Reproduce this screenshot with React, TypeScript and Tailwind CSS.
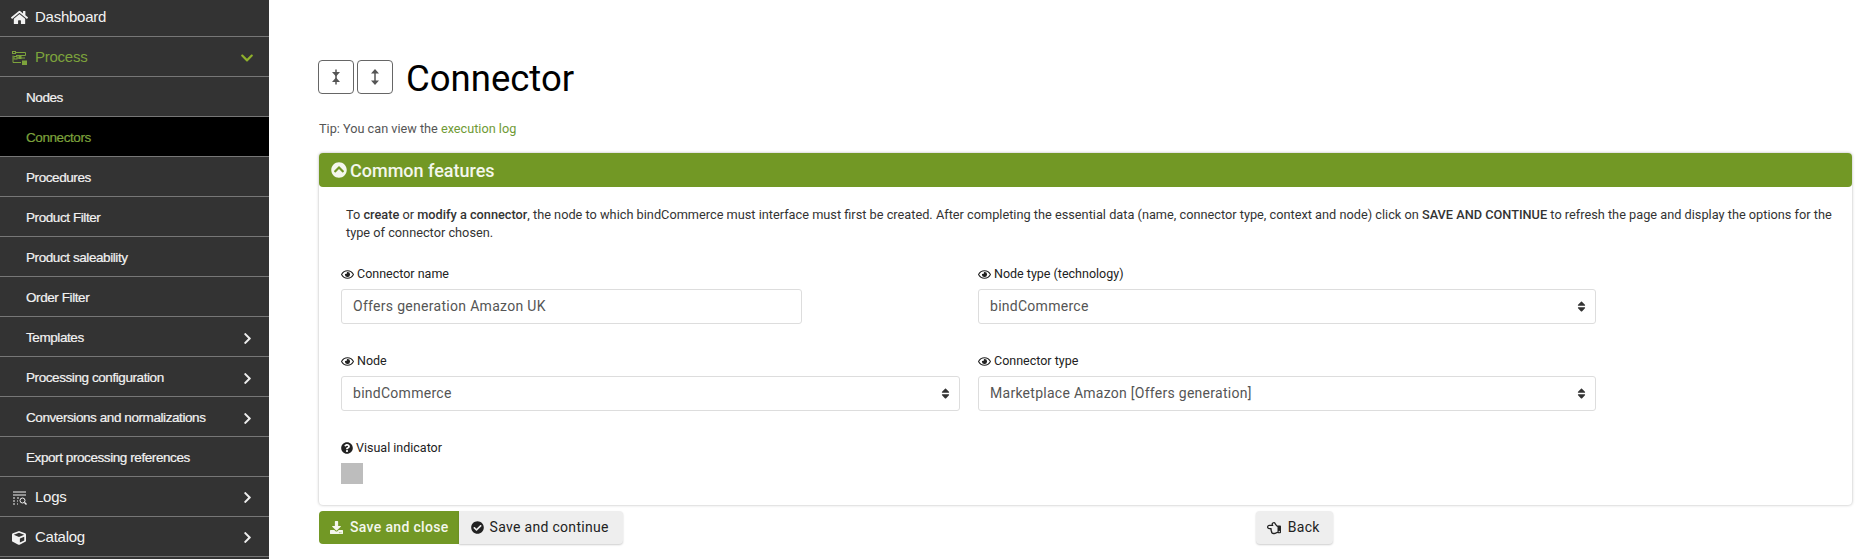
import React from "react";
import { FaHome, FaChevronDown, FaChevronRight, FaRegEye, FaQuestionCircle, FaDownload, FaCheckCircle, FaChevronCircleUp, FaRegHandPointLeft, FaSort, FaCube } from "react-icons/fa";

const ProcessIcon = () => (
  <svg width="15" height="14" viewBox="0 0 15 14" fill="none" stroke="currentColor" strokeWidth="1">
    <rect x="0.500" y="0.500" width="3" height="2" />
    <path d="M3.500 1.500H13.500V4.500H4M1 4.500V11.500H9" />
    <rect x="2" y="5.500" width="3" height="2.500" />
    <path d="M5 7h8" />
    <rect x="7" y="5.500" width="2" height="2" fill="currentColor" />
    <rect x="10.500" y="10" width="4" height="3.500" fill="currentColor" />
  </svg>
);

const LogsIcon = () => (
  <svg width="15" height="14" viewBox="0 0 15 14" fill="none" stroke="currentColor" strokeWidth="1">
    <path d="M1 1h13M1 4h13" />
    <path d="M1 7h2M1 10h2M1 13h2M5 7h2M5 10h1M5 13h1" />
    <circle cx="10.500" cy="9.500" r="2.500" />
    <path d="M12.500 11.500l2 2" strokeWidth="1.400" />
  </svg>
);

const MENU: { label: string; level: 0 | 1; icon?: React.ReactNode; chevron?: "right" | "down"; state?: "open" | "active" }[] = [
  { label: "Process", level: 0, icon: <ProcessIcon />, chevron: "down", state: "open" },
  { label: "Nodes", level: 1 },
  { label: "Connectors", level: 1, state: "active" },
  { label: "Procedures", level: 1 },
  { label: "Product Filter", level: 1 },
  { label: "Product saleability", level: 1 },
  { label: "Order Filter", level: 1 },
  { label: "Templates", level: 1, chevron: "right" },
  { label: "Processing configuration", level: 1, chevron: "right" },
  { label: "Conversions and normalizations", level: 1, chevron: "right" },
  { label: "Export processing references", level: 1 },
  { label: "Logs", level: 0, icon: <LogsIcon />, chevron: "right" },
  { label: "Catalog", level: 0, icon: <FaCube size={14} />, chevron: "right" },
];

const Row = ({ item }: { item: (typeof MENU)[number] }) => {
  const green = item.state ? "text-[#7da33c]" : "text-[#f2f2f2]";
  return (
    <div className={`flex h-10 shrink-0 items-center border-b border-[#777] pr-[15px] ${item.level === 1 ? "pt-[3px]" : "pt-[2px]"} ${item.state === "active" ? "bg-black" : ""} ${green}`}>
      {item.level === 0 ? (
        <>
          <span className="flex w-[35px] pl-[12px]">{item.icon}</span>
          <span className="text-[15px] tracking-[-0.25px]">{item.label}</span>
        </>
      ) : (
        <span className="pl-[26px] text-[13.500px] tracking-[-0.42px] [-webkit-text-stroke:0.2px]">{item.label}</span>
      )}
      {item.chevron === "right" && <FaChevronRight size={13} className="ml-auto text-[#eee]" />}
      {item.chevron === "down" && <FaChevronDown size={14} className="ml-auto text-[#8fb02c]" />}
    </div>
  );
};

const Label = ({ q, children }: { q?: boolean; children: React.ReactNode }) => (
  <div className="mb-[5px] flex h-[20px] items-center gap-[3px] text-[12.500px] text-[#222]">
    {q ? <FaQuestionCircle size={12} /> : <FaRegEye size={13} />}
    {children}
  </div>
);

const Select = ({ value }: { value: string }) => (
  <div className="flex h-[35px] items-center justify-between rounded-[3px] border border-[#ddd] pl-[11px] pr-[7px] text-[14px] tracking-[0.27px] text-[#555]">
    {value}
    <FaSort size={13} className="text-[#333]" />
  </div>
);

const SmallBtn = ({ children }: { children: React.ReactNode }) => (
  <div className="flex h-[34px] w-[36px] items-center justify-center rounded-[4px] border border-[#666]">{children}</div>
);

export default function App() {
  return (
    <div className="flex h-[559px] w-[1869px] overflow-hidden bg-white font-['Roboto',sans-serif]">
      <aside className="h-[559px] w-[269px] shrink-0 overflow-hidden bg-[#333] font-['Liberation_Sans',sans-serif]">
        <div className="-mt-[3px]">
          <div className="flex h-10 items-center border-b border-[#777] pt-[2px] text-[#f2f2f2]">
            <span className="flex w-[35px] pl-[11px]"><FaHome size={17} /></span>
            <span className="text-[15px] tracking-[-0.25px]">Dashboard</span>
          </div>
          {MENU.map((m) => <Row key={m.label} item={m} />)}
        </div>
      </aside>
      <main className="min-w-0 flex-1 pl-[50px] pr-[17px] pt-[60px]">
        <div className="flex h-[34px] items-start">
          <div className="-ml-[1px] flex gap-[3px]">
            <SmallBtn>
              <svg width="10" height="16" viewBox="0 0 10 16" fill="#555" stroke="#555"><path d="M5 0.500v15" strokeWidth="1.500" /><path d="M1 3h8L5 7.500zM1 13h8L5 8.500z" strokeWidth="0" /></svg>
            </SmallBtn>
            <SmallBtn>
              <svg width="10" height="18" viewBox="0 0 10 18" fill="#555" stroke="#555"><path d="M5 3v12" strokeWidth="1.500" /><path d="M1 5.500h8L5 1zM1 12.500h8L5 17z" strokeWidth="0" /></svg>
            </SmallBtn>
          </div>
          <h1 className="ml-[13px] mt-[2px] text-[36.500px] leading-[34px] text-black">Connector</h1>
        </div>
        <p className="mt-[25px] h-[20px] text-[12.700px] leading-[20px] text-[#555]">
          Tip: You can view the <span className="text-[#6f9a35]">execution log</span>
        </p>
        <section className="mt-[14px] rounded-[4px] shadow-[0_0_3px_rgba(0,0,0,0.3)]">
          <div className="flex h-[34px] items-center gap-[3px] rounded-[4px] bg-[#729825] pl-[12px] text-[18px] font-medium text-[#f4f7ec]">
            <FaChevronCircleUp size={16} />
            Common features
          </div>
          <div className="h-[318px] pl-[22px] pr-[16px] pt-[19px]">
            <p className="pl-[5px] text-[12.750px] leading-[18px] text-[#333]">
              To <b className="font-medium">create</b> or <b className="font-medium">modify a connector</b>, the node to which bindCommerce must interface must first be created. After completing the essential data (name, connector type, context and node) click on <b className="font-medium">SAVE AND CONTINUE</b> to refresh the page and display the options for the type of connector chosen.
            </p>
            <div className="mt-[22px] grid grid-cols-[619px_618px] gap-x-[18px] gap-y-[27px]">
              <div>
                <Label>Connector name</Label>
                <div className="flex h-[35px] w-[461px] items-center rounded-[3px] border border-[#ddd] pl-[11px] text-[14px] tracking-[0.3px] text-[#555]">Offers generation Amazon UK</div>
              </div>
              <div>
                <Label>Node type (technology)</Label>
                <Select value="bindCommerce" />
              </div>
              <div>
                <Label>Node</Label>
                <Select value="bindCommerce" />
              </div>
              <div>
                <Label>Connector type</Label>
                <Select value="Marketplace Amazon [Offers generation]" />
              </div>
              <div>
                <Label q>Visual indicator</Label>
                <div className="mt-px h-[21px] w-[22px] bg-[#bdbdbd]" />
              </div>
            </div>
          </div>
        </section>
        <div className="mt-[6px] flex">
          <div className="flex h-[33px] items-center gap-[7px] rounded-l-[4px] bg-[#729825] pl-[11px] pr-[10px] text-[14px] font-medium tracking-[0.33px] text-[#f4f7ec]">
            <FaDownload size={13} />
            Save and close
          </div>
          <div className="flex h-[33px] items-center gap-[6px] rounded-r-[4px] bg-[#eee] pl-[12px] pr-[14px] text-[14px] tracking-[0.3px] text-[#222] shadow-[0_1px_2px_rgba(0,0,0,0.2)]">
            <FaCheckCircle size={13} />
            Save and continue
          </div>
          <div className="ml-[633px] flex h-[33px] items-center gap-[7px] rounded-[4px] bg-[#eee] pl-[11px] pr-[13px] text-[14px] tracking-[0.3px] text-[#222] shadow-[0_1px_2px_rgba(0,0,0,0.2)]">
            <FaRegHandPointLeft size={14} />
            Back
          </div>
        </div>
      </main>
    </div>
  );
}
